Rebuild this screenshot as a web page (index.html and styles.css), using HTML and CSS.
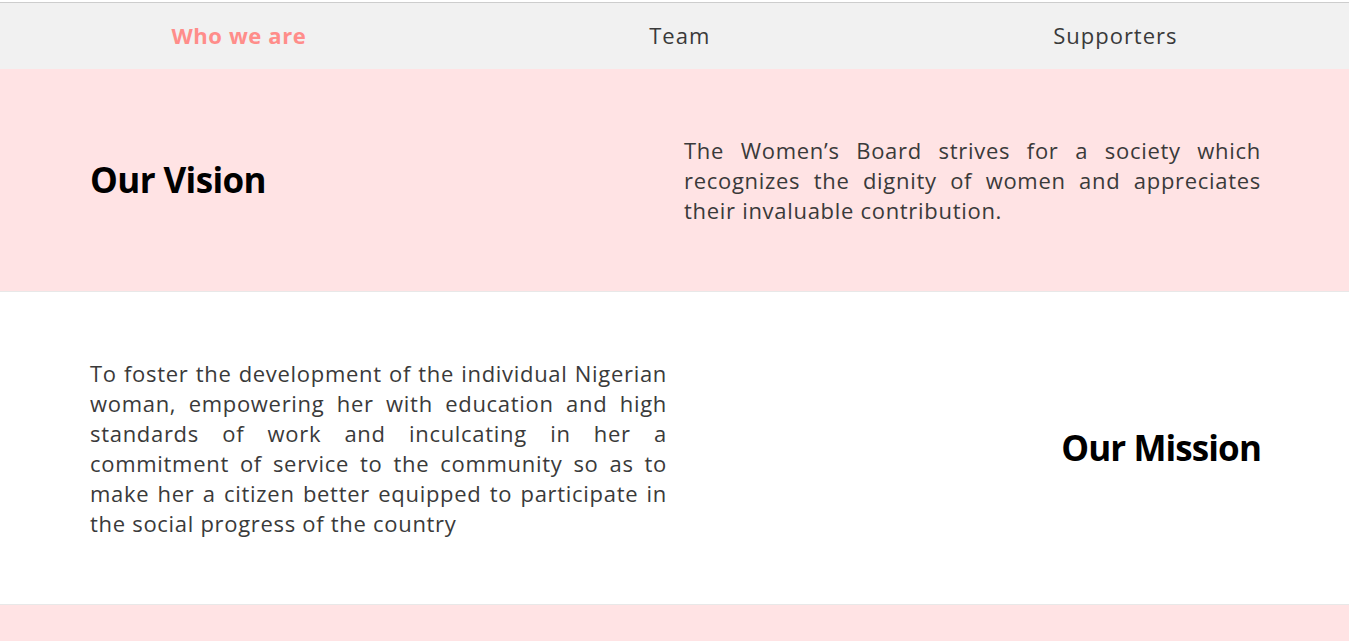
FILE: index.html
```html
<!DOCTYPE html>
<html lang="en">
<head>
<meta charset="utf-8">
<title>Who we are</title>
<link rel="stylesheet" href="styles.css">
</head>
<body>
<div class="topgap"></div>
<nav class="tabs">
  <a class="tab active" href="#">Who we are</a>
  <a class="tab" href="#">Team</a>
  <a class="tab" href="#">Supporters</a>
</nav>
<section class="band pink">
  <div class="cols">
    <h2 class="title">Our Vision</h2>
    <p class="text">The Women’s Board strives for a society which recognizes the dignity of women and appreciates their invaluable contribution.</p>
  </div>
</section>
<section class="band white">
  <div class="cols">
    <p class="text">To foster the development of the individual Nigerian woman, empowering her with education and high standards of work and inculcating in her a commitment of service to the community so as to make her a citizen better equipped to participate in the social progress of the country</p>
    <h2 class="title right">Our Mission</h2>
  </div>
</section>
<section class="band pink tail"></section>
</body>
</html>
```
FILE: styles.css
```css
html, body {
  margin: 0;
  padding: 0;
  background: #ffffff;
  font-family: "Open Sans", "Noto Sans", sans-serif;
}
.topgap {
  height: 2px;
  background: #ffffff;
}
.tabs {
  display: flex;
  justify-content: space-around;
  align-items: center;
  height: 66px;
  background: #f1f1f1;
  border-top: 1px solid #cdcdcd;
}
.tab {
  font-size: 22px;
  color: #3a3a3a;
  text-decoration: none;
  letter-spacing: 1px;
  margin-top: -3px;
}
.tab.active {
  color: #ff8d8a;
  font-weight: 700;
  letter-spacing: 0.6px;
}
.band {
  padding: 66px 88px 66px 90px;
  border-bottom: 1px solid #e8e8e8;
}
.pink {
  background: #ffe3e4;
}
.white {
  background: #ffffff;
}
.tail {
  height: 60px;
  padding: 0;
  border-bottom: none;
}
.cols {
  display: grid;
  grid-template-columns: 1fr 1fr;
  column-gap: 17px;
  align-items: center;
}
.title {
  margin: 0;
  font-size: 35px;
  font-weight: 700;
  color: #000;
  line-height: 40px;
  letter-spacing: -0.6px;
}
.title.right {
  text-align: right;
  letter-spacing: -0.9px;
}
.text {
  margin: 0;
  font-size: 22px;
  line-height: 30px;
  color: #3a3a3a;
  text-align: justify;
  letter-spacing: 0.7px;
}
```
